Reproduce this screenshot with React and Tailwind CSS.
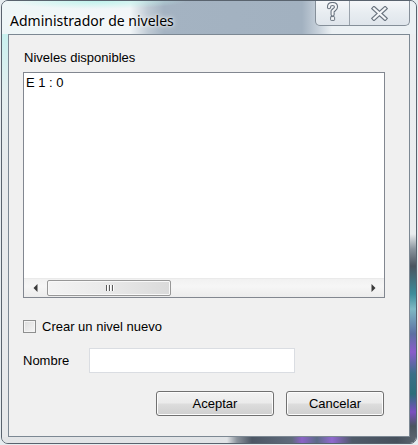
import React from 'react'

const sans = "font-['Liberation_Sans',Arial,sans-serif]"

function HelpGlyph() {
  return (
    <svg width="13" height="20" viewBox="0 0 13 20">
      <g fill="none" strokeLinecap="round" strokeLinejoin="round">
        <path d="M3 5.2 C3 2.8 4.6 2 6.5 2 C8.6 2 10 3.2 10 5 C10 7 7.8 7.6 6.6 9.2 L6.6 12.5" stroke="#6b7580" strokeWidth="4.2" />
        <path d="M3 5.2 C3 2.8 4.6 2 6.5 2 C8.6 2 10 3.2 10 5 C10 7 7.8 7.6 6.6 9.2 L6.6 12.5" stroke="#f4f6f8" strokeWidth="2" />
        <rect x="4.6" y="14.6" width="4" height="3.8" rx="0.6" fill="#f4f6f8" stroke="#6b7580" strokeWidth="1" />
      </g>
    </svg>
  )
}

function CloseGlyph() {
  return (
    <svg width="17" height="15" viewBox="0 0 17 15">
      <g fill="none" strokeLinecap="square">
        <path d="M3 2.5 L14 12.5 M14 2.5 L3 12.5" stroke="#6b7580" strokeWidth="4.4" />
        <path d="M3 2.5 L14 12.5 M14 2.5 L3 12.5" stroke="#f4f6f8" strokeWidth="2.2" />
      </g>
    </svg>
  )
}

function Arrow({ dir }) {
  return (
    <svg width="5" height="8" viewBox="0 0 5 8">
      {dir === 'left'
        ? <path d="M4.5 0 L0.5 4 L4.5 8 Z" fill="#3a3a3a" />
        : <path d="M0.5 0 L4.5 4 L0.5 8 Z" fill="#3a3a3a" />}
    </svg>
  )
}

function WinButton({ label, width }) {
  return (
    <button
      className={`${width} h-[25px] rounded-[3px] border border-[#707070] bg-[linear-gradient(#f2f2f2_0%,#ebebeb_48%,#dddddd_52%,#cfcfcf_100%)] shadow-[inset_0_0_0_1px_#fcfcfc] text-[13px] leading-[15px] text-black ${sans}`}
    >
      {label}
    </button>
  )
}

export default function App() {
  return (
    <div className="w-[418px] h-[445px] pl-px bg-[#e6ecef]">
      <div className="w-[416px] h-[444px] rounded-[7px] border border-[#59636e] flex flex-col overflow-hidden">
        {/* title bar */}
        <div className="h-[33px] flex bg-[radial-gradient(ellipse_90px_8px_at_95px_0px,#bff3ec,transparent),linear-gradient(90deg,#eef6f7_0px,#f2f6f8_128px,#bfcad4_146px,#a4b3c2_162px,#a2b1c0_300px,#c6d0da_316px,#ecf1f4_330px)]">
          <div className="flex-1 pl-[8px] pt-[7px]">
            <span className="font-['Noto_Sans',sans-serif] text-[14px] leading-[20px] text-black [text-shadow:0_0_6px_#ffffff,0_0_3px_#ffffff]">
              Administrador de niveles
            </span>
          </div>
          <div className="-mt-px mr-[6px] w-[95px] h-[26px] flex rounded-b-[5px] border border-t-0 border-[#858f99] bg-[linear-gradient(#f6f8fa,#e8edf1_50%,#dfe5eb)] overflow-hidden">
            <div className="w-[34px] flex justify-center pt-[2px] border-r border-[#9aa3ac]">
              <HelpGlyph />
            </div>
            <div className="flex-1 flex justify-center pt-[6px]">
              <CloseGlyph />
            </div>
          </div>
        </div>

        <div className="flex h-[403px]">
          <div className="w-[6px] bg-[linear-gradient(#c9f1ef_0px,#e4eeef_60px,#e7eaec_140px,#e7e9eb_100%)]" />

          {/* client area */}
          <div className={`w-[402px] border border-[#7c8893] bg-[#f0f0f0] pl-[14px] flex flex-col ${sans}`}>
            <div className="mt-[15px] ml-px h-[15px] text-[13px] leading-[15px] text-black">Niveles disponibles</div>

            <div className="mt-[7px] w-[362px] h-[226px] border border-[#828790] bg-white flex flex-col">
              <div className="flex-1 pl-[2px] pt-[2px] text-[13px] leading-[15px] text-black">E 1 : 0</div>
              <div className="h-[19px] flex items-stretch border-t border-[#eaeaea] bg-[linear-gradient(#f1f1f1,#f6f6f6_40%,#ececec)]">
                <div className="w-[22px] flex items-center justify-center"><Arrow dir="left" /></div>
                <div className="ml-px my-px w-[124px] rounded-[2px] border border-[#979797] bg-[linear-gradient(90deg,#f3f3f3,#e9e9e9_50%,#dadada)] flex items-center justify-center gap-[2px] shadow-[inset_0_0_0_1px_#f8f8f8]">
                  <span className="w-px h-[6px] bg-[#5a5a5a] shadow-[1px_0_0_#ffffff]" />
                  <span className="w-px h-[6px] bg-[#5a5a5a] shadow-[1px_0_0_#ffffff]" />
                  <span className="w-px h-[6px] bg-[#5a5a5a] shadow-[1px_0_0_#ffffff]" />
                </div>
                <div className="flex-1" />
                <div className="w-[22px] flex items-center justify-center"><Arrow dir="right" /></div>
              </div>
            </div>

            <div className="mt-[21px] flex items-center">
              <span className="w-[13px] h-[13px] border border-[#8e8f8f] bg-[linear-gradient(135deg,#dcdcdc,#f6f6f6)] shadow-[inset_0_0_0_1px_#f4f4f4]" />
              <span className="ml-[6px] text-[13px] leading-[15px] text-black">Crear un nivel nuevo</span>
            </div>

            <div className="mt-[14px] flex items-center">
              <span className="w-[66px] text-[13px] leading-[15px] text-black">Nombre</span>
              <div className="w-[206px] h-[25px] border border-[#dadde2] bg-white" />
            </div>

            <div className="mt-[18px] w-[361px] flex justify-end gap-[12px]">
              <WinButton label="Aceptar" width="w-[118px]" />
              <WinButton label="Cancelar" width="w-[98px]" />
            </div>
          </div>

          <div className="w-[6px] bg-[linear-gradient(#eceff1_0px,#e9ecee_200px,#8a949e_215px,#4b5560_232px,#3d8d9b_260px,#7fb9c4_275px,#5d6fa3_300px,#8a5dcb_318px,#3a6f88_340px,#2b6e7a_360px,#7a4fc0_378px,#4b5560_392px,#59626c_100%)]" />
        </div>

        <div className="h-[6px] bg-[linear-gradient(90deg,#e3e5e7_0px,#e0e3e6_225px,#8b939c_235px,#4c5664_250px,#5f6b7c_290px,#8b62c7_300px,#5b6c86_315px,#9068cf_330px,#4f5a69_350px,#46505c_395px,#5c6670_100%)]" />
      </div>
    </div>
  )
}
